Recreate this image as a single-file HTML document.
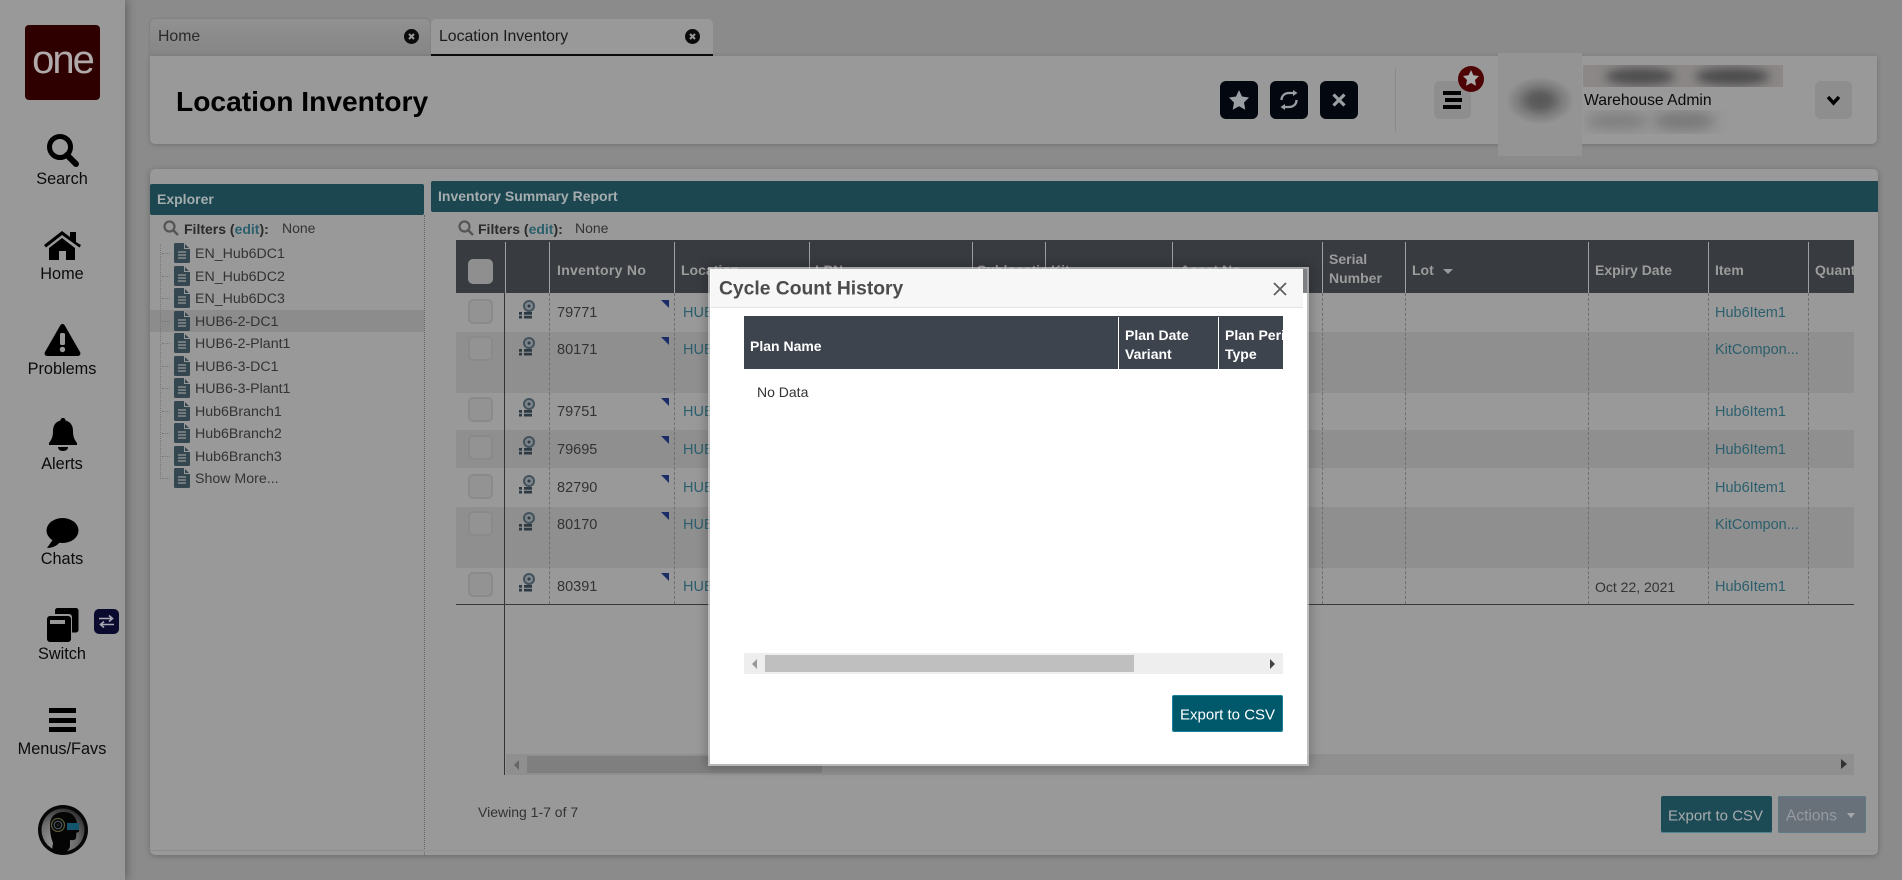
<!DOCTYPE html>
<html><head><meta charset="utf-8"><title>Location Inventory</title>
<style>
html,body{margin:0;padding:0;width:1902px;height:880px;overflow:hidden;background:#8b8b8b;font-family:"Liberation Sans",sans-serif}
div,span,svg{position:absolute}
.t{white-space:nowrap;line-height:1;transform:translateY(-50%);color:#333;font-size:14px}
.c{transform:translate(-50%,calc(-50% + 1px));color:#0b0b0b;font-size:16.300px}
.h{color:#9c9c9c;font-weight:bold;font-size:14px}
.l{color:#2c5f6d}
.b{font-weight:bold}
.sep{width:1px;top:242px;height:51px;background:#a0a0a0}
.dash{width:0;top:293px;height:311px;border-left:1px dashed #6f6f6f}
.cb{left:468px;width:21px;height:21px;border:2px solid #8a8a8a;border-radius:5px;background:#939393}
.band{left:456px;width:1398px;background:#8f8f8f}
.tri{left:661px;width:0;height:0;border-left:8px solid transparent;border-top:8px solid #1b2c66}
.tl{left:195px;font-size:14.200px;color:#333;transform:translateY(calc(-50% + 1px))}
.r{font-size:14.500px;transform:translateY(calc(-50% + 1px))}
.st{left:162px;width:8px;height:0;border-top:1px dotted #777}
</style></head><body>
<!-- sidebar -->
<div style="left:0;top:0;width:125px;height:880px;background:#999;box-shadow:3px 0 8px rgba(0,0,0,.25)"></div>
<div style="left:25px;top:25px;width:75px;height:75px;background:#2e0000;border-radius:4px"></div>
<div class="t" style="left:25px;top:60px;font-size:40px;color:#b0aaaa;letter-spacing:-2px;width:75px;text-align:center">one</div>
<svg style="left:46px;top:133px" width="34" height="34" viewBox="0 0 34 34"><circle cx="14" cy="14" r="10.500" fill="none" stroke="#000" stroke-width="5"/><path d="M21 22l9 9" stroke="#000" stroke-width="6" stroke-linecap="round"/></svg>
<div class="t c" style="left:62px;top:178px">Search</div>
<svg style="left:44px;top:230px" width="37" height="30" viewBox="0 0 37 30"><path d="M0 15L18 1l8 6V2h6v10l5 3-1.500 2.500L18 5 2 17.500z" fill="#000"/><path d="M5 18L18 8l13 10v12h-9v-9h-7v9H5z" fill="#000"/></svg>
<div class="t c" style="left:62px;top:273px">Home</div>
<svg style="left:44px;top:323px" width="37" height="34" viewBox="0 0 37 34"><path d="M18.500 1c1 0 1.800.6 2.300 1.500L36 29c1 2 0 4-2.300 4H3.300C1 33 0 31 1 29L16.200 2.500C16.700 1.600 17.500 1 18.500 1z" fill="#000"/><rect x="16" y="10" width="5" height="12" rx="1.500" fill="#999"/><circle cx="18.500" cy="26.500" r="2.700" fill="#999"/></svg>
<div class="t c" style="left:62px;top:368px">Problems</div>
<svg style="left:48px;top:418px" width="30" height="34" viewBox="0 0 30 34"><path d="M15 0c1.500 0 2.500 1 2.500 2.500C23 4 25 8 25 13c0 7 2 9 4 12v2H1v-2c2-3 4-5 4-12 0-5 2-9 7.500-10.500C12.500 1 13.500 0 15 0z" fill="#000"/><path d="M10 29h10c0 2.500-2 4-5 4s-5-1.500-5-4z" fill="#000"/></svg>
<div class="t c" style="left:62px;top:463px">Alerts</div>
<svg style="left:46px;top:518px" width="33" height="30" viewBox="0 0 33 30"><ellipse cx="16.500" cy="12.500" rx="16" ry="12.500" fill="#000"/><path d="M8 20L1 30c5 0 10-2 13-6z" fill="#000"/></svg>
<div class="t c" style="left:62px;top:558px">Chats</div>
<svg style="left:46px;top:608px" width="33" height="34" viewBox="0 0 33 34"><path d="M9 2.500A2.500 2.500 0 0 1 11.500 0H30a2.500 2.500 0 0 1 2.500 2.500V22a2.500 2.500 0 0 1-2.500 2.500h-4V9a3 3 0 0 0-3-3H9z" fill="#000"/><rect x="1" y="8" width="24" height="26" rx="3" fill="#000"/><rect x="4" y="12" width="15" height="4" fill="#999"/></svg>
<div style="left:94px;top:609px;width:25px;height:25px;border-radius:5px;background:#0a0a2e"></div>
<svg style="left:98px;top:614px" width="17" height="15" viewBox="0 0 17 15"><path d="M1 4.500h13M11 1.500l3.500 3-3.500 3M16 10.500H3M6 7.500l-3.500 3 3.500 3" fill="none" stroke="#a9a9b5" stroke-width="1.600"/></svg>
<div class="t c" style="left:62px;top:653px">Switch</div>
<div style="left:49px;top:708px;width:27px;height:5px;background:#000"></div>
<div style="left:49px;top:718px;width:27px;height:5px;background:#000"></div>
<div style="left:49px;top:727px;width:27px;height:5px;background:#000"></div>
<div class="t c" style="left:62px;top:748px">Menus/Favs</div>
<svg style="left:38px;top:805px" width="50" height="50" viewBox="0 0 50 50"><defs><radialGradient id="ag" cx=".35" cy=".75" r=".8"><stop offset="0" stop-color="#9a9a9a"/><stop offset=".6" stop-color="#6a6a6a"/><stop offset="1" stop-color="#2e2e2e"/></radialGradient></defs><circle cx="25" cy="25" r="25" fill="#070707"/><circle cx="25" cy="25" r="21.500" fill="url(#ag)"/><path d="M12 20C12 11 18 7 26 7c7 0 12 4 13 11l2 7c.5 2-1 2.500-2.500 2.500L38 33c-.5 2-3 2.500-6 2v6c0 2-2 5-5 6-5 1-10 0-13-1l1-8c-2-5-3-10-3-18z" fill="#050505"/><rect x="29" y="18" width="12" height="7" fill="#14556e"/><circle cx="20" cy="20" r="6.500" fill="none" stroke="#58583a" stroke-width="1.300"/><circle cx="20" cy="20" r="3.800" fill="none" stroke="#4a5a60" stroke-width="1.200"/><circle cx="20" cy="20" r="1.500" fill="#222"/></svg>

<!-- tabs -->
<div style="left:150px;top:19px;width:280px;height:37px;background:linear-gradient(#919191,#858585);border-radius:5px 5px 0 0;box-shadow:0 0 2px rgba(0,0,0,.2)"></div>
<div class="t" style="left:158px;top:37px;font-size:15.800px;color:#2a2a2a">Home</div>
<svg style="left:404px;top:29px" width="15" height="15" viewBox="0 0 15 15"><circle cx="7.500" cy="7.500" r="7.500" fill="#0b0b0b"/><path d="M5 5l5 5M10 5l-5 5" stroke="#999" stroke-width="2"/></svg>
<div style="left:431px;top:19px;width:282px;height:35px;background:#999;border-bottom:2px solid #0b0b0b;border-radius:5px 5px 0 0"></div>
<div class="t" style="left:439px;top:37px;font-size:15.800px;color:#1a1a1a">Location Inventory</div>
<svg style="left:685px;top:29px" width="15" height="15" viewBox="0 0 15 15"><circle cx="7.500" cy="7.500" r="7.500" fill="#0b0b0b"/><path d="M5 5l5 5M10 5l-5 5" stroke="#999" stroke-width="2"/></svg>

<!-- header -->
<div style="left:150px;top:56px;width:1727px;height:88px;background:#999;border-radius:0 0 5px 5px;box-shadow:0 1px 5px rgba(0,0,0,.2)"></div>
<div class="t b" style="left:176px;top:101px;font-size:28.200px;color:#000">Location Inventory</div>
<div style="left:1220px;top:81px;width:38px;height:38px;border-radius:6px;background:#030810"></div>
<div style="left:1270px;top:81px;width:38px;height:38px;border-radius:6px;background:#030810"></div>
<div style="left:1320px;top:81px;width:38px;height:38px;border-radius:6px;background:#030810"></div>
<svg style="left:1229px;top:90px" width="20" height="20" viewBox="0 0 20 20"><path d="M10 0l3 6.500 7 1-5 5 1.300 7.200L10 16.200 3.700 19.700 5 12.500 0 7.500l7-1z" fill="#9a9fa3"/></svg>
<svg style="left:1279px;top:90px" width="20" height="20" viewBox="0 0 20 20"><path d="M2.500 10C2.500 5.500 6 3 10 3h5M17.500 10c0 4.500-3.500 7-7.500 7H5" fill="none" stroke="#9a9fa3" stroke-width="2.300"/><path d="M14 0l4.500 3-4.500 3zM6 14l-4.500 3L6 20z" fill="#9a9fa3"/></svg>
<svg style="left:1331px;top:92px" width="16" height="16" viewBox="0 0 16 16"><path d="M2.500 2.500l11 11M13.500 2.500l-11 11" stroke="#9a9fa3" stroke-width="3.200"/></svg>
<div style="left:1395px;top:69px;width:1px;height:62px;background:#888"></div>
<div style="left:1434px;top:81px;width:37px;height:38px;border-radius:6px;background:#8e8e8e"></div>
<div style="left:1443px;top:91px;width:18px;height:4px;background:#000"></div>
<div style="left:1445px;top:98px;width:17px;height:4px;background:#000"></div>
<div style="left:1443px;top:105px;width:18px;height:4px;background:#000"></div>
<div style="left:1458px;top:66px;width:26px;height:26px;border-radius:50%;background:#4e0404"></div>
<svg style="left:1463px;top:70px" width="16" height="16" viewBox="0 0 20 20"><path d="M10 0l3 6.500 7 1-5 5 1.300 7.200L10 16.200 3.700 19.700 5 12.500 0 7.500l7-1z" fill="#aaa"/></svg>
<div style="left:1498px;top:53px;width:84px;height:103px;background:radial-gradient(ellipse 34px 24px at 50% 46%,#575757 0,#5f5f5f 30%,#7d7d7d 65%,#949494 100%);background-color:#979797"></div>
<div style="left:1583px;top:65px;width:200px;height:22px;background:#8c8888;overflow:hidden"><div style="left:22px;top:3px;width:70px;height:17px;background:#4c4c4c;border-radius:50%;filter:blur(5px)"></div><div style="left:112px;top:3px;width:75px;height:17px;background:#4a4a4a;border-radius:50%;filter:blur(5px)"></div></div>
<div class="t" style="left:1584px;top:101px;font-size:15.700px;color:#0b0b0b">Warehouse Admin</div>
<div style="left:1583px;top:110px;width:145px;height:24px;background:#989898;overflow:hidden"><div style="left:3px;top:3px;width:62px;height:16px;background:#7e7e7e;border-radius:45%;filter:blur(6px)"></div><div style="left:70px;top:2px;width:62px;height:18px;background:#787878;border-radius:45%;filter:blur(6px)"></div></div>
<div style="left:1815px;top:81px;width:37px;height:38px;border-radius:6px;background:#8e8e8e"></div>
<svg style="left:1826px;top:95px" width="15" height="11" viewBox="0 0 15 11"><path d="M2 2l5.500 6L13 2" fill="none" stroke="#000" stroke-width="3.500"/></svg>

<!-- main panel -->
<div style="left:150px;top:169px;width:1728px;height:686px;background:#999;border-radius:5px;box-shadow:0 1px 6px rgba(0,0,0,.25)"></div>
<div style="left:150px;top:184px;width:274px;height:31px;background:#1c4650;border-radius:2px"></div>
<div class="t h" style="left:157px;top:199px;color:#a5adaf">Explorer</div>
<div style="left:424px;top:215px;height:640px;width:0;border-left:1px dotted #666"></div>
<div style="left:150px;top:850px;width:274px;height:1px;background:#8c8c8c"></div>
<div style="left:424px;top:850px;width:1454px;height:1px;background:#949494"></div>
<svg style="left:163px;top:220px" width="16" height="16" viewBox="0 0 16 16"><circle cx="6.500" cy="6.500" r="5" fill="none" stroke="#555" stroke-width="2.200"/><path d="M10.500 10.500l4.500 4.500" stroke="#555" stroke-width="2.500"/></svg>
<div class="t b" style="left:184px;top:229px;font-size:14px;color:#2b2b2b">Filters (<span class="l" style="position:static">edit</span>):</div>
<div class="t" style="left:282px;top:228px;font-size:14px">None</div>
<div style="left:150px;top:310px;width:274px;height:22px;background:#8c8c8c"></div>
<div style="left:160px;top:244px;height:235px;width:0;border-left:1px dotted #777"></div>
<div class="st" style="top:253px"></div><div class="st" style="top:276px"></div><div class="st" style="top:298px"></div><div class="st" style="top:321px"></div><div class="st" style="top:343px"></div><div class="st" style="top:366px"></div><div class="st" style="top:388px"></div><div class="st" style="top:411px"></div><div class="st" style="top:433px"></div><div class="st" style="top:456px"></div><div class="st" style="top:478px"></div>
<svg width="0" height="0"><defs><g id="f"><path d="M0 1.500A1.500 1.500 0 0 1 1.500 0H10l6 6v12.500a1.500 1.500 0 0 1-1.500 1.500h-13A1.500 1.500 0 0 1 0 18.500z" fill="#344650"/><path d="M10.500 0v5.500H16" fill="none" stroke="#999" stroke-width="1"/><path d="M4 9h8M4 12h8M4 15h8" stroke="#999" stroke-width="1.300"/></g></defs></svg>
<svg style="left:174px;top:243px" width="16" height="20"><use href="#f"/></svg>
<svg style="left:174px;top:266px" width="16" height="20"><use href="#f"/></svg>
<svg style="left:174px;top:288px" width="16" height="20"><use href="#f"/></svg>
<svg style="left:174px;top:311px" width="16" height="20"><use href="#f"/></svg>
<svg style="left:174px;top:333px" width="16" height="20"><use href="#f"/></svg>
<svg style="left:174px;top:356px" width="16" height="20"><use href="#f"/></svg>
<svg style="left:174px;top:378px" width="16" height="20"><use href="#f"/></svg>
<svg style="left:174px;top:401px" width="16" height="20"><use href="#f"/></svg>
<svg style="left:174px;top:423px" width="16" height="20"><use href="#f"/></svg>
<svg style="left:174px;top:446px" width="16" height="20"><use href="#f"/></svg>
<svg style="left:174px;top:468px" width="16" height="20"><use href="#f"/></svg>
<div class="t tl" style="top:253px">EN_Hub6DC1</div>
<div class="t tl" style="top:276px">EN_Hub6DC2</div>
<div class="t tl" style="top:298px">EN_Hub6DC3</div>
<div class="t tl" style="top:321px">HUB6-2-DC1</div>
<div class="t tl" style="top:343px">HUB6-2-Plant1</div>
<div class="t tl" style="top:366px">HUB6-3-DC1</div>
<div class="t tl" style="top:388px">HUB6-3-Plant1</div>
<div class="t tl" style="top:411px">Hub6Branch1</div>
<div class="t tl" style="top:433px">Hub6Branch2</div>
<div class="t tl" style="top:456px">Hub6Branch3</div>
<div class="t tl" style="top:478px">Show More...</div>

<!-- report -->
<div style="left:431px;top:181px;width:1447px;height:31px;background:#1c4650;border-radius:2px 0 0 2px"></div>
<div class="t h" style="left:438px;top:196px;color:#a5adaf">Inventory Summary Report</div>
<svg style="left:458px;top:220px" width="16" height="16" viewBox="0 0 16 16"><circle cx="6.500" cy="6.500" r="5" fill="none" stroke="#555" stroke-width="2.200"/><path d="M10.500 10.500l4.500 4.500" stroke="#555" stroke-width="2.500"/></svg>
<div class="t b" style="left:478px;top:229px;font-size:14px;color:#2b2b2b">Filters (<span class="l" style="position:static">edit</span>):</div>
<div class="t" style="left:575px;top:228px;font-size:14px">None</div>

<div class="band" style="top:332px;height:61px"></div>
<div class="band" style="top:430px;height:38px"></div>
<div class="band" style="top:507px;height:61px"></div>
<div style="left:456px;top:240px;width:1398px;height:53px;background:#383b40"></div>
<div class="sep" style="left:505px"></div><div class="sep" style="left:549px"></div><div class="sep" style="left:674px"></div><div class="sep" style="left:809px"></div><div class="sep" style="left:972px"></div><div class="sep" style="left:1045px"></div><div class="sep" style="left:1172px"></div><div class="sep" style="left:1322px"></div><div class="sep" style="left:1405px"></div><div class="sep" style="left:1588px"></div><div class="sep" style="left:1708px"></div><div class="sep" style="left:1808px"></div>
<div style="left:549px" class="dash"></div><div style="left:674px" class="dash"></div><div style="left:1322px" class="dash"></div><div style="left:1405px" class="dash"></div><div style="left:1588px" class="dash"></div><div style="left:1708px" class="dash"></div><div style="left:1808px" class="dash"></div>
<div style="left:504px;top:293px;width:1px;height:482px;background:#333"></div>
<div style="left:456px;top:604px;width:1398px;height:1px;background:#383838"></div>
<div style="left:468px;top:259px;width:21px;height:21px;border-radius:5px;border:2px solid #8f8f8f;background:#8f8f8f"></div>
<div class="t h" style="left:557px;top:270px;letter-spacing:.3px">Inventory No</div>
<div class="t h" style="left:681px;top:270px">Location</div>
<div class="t h" style="left:815px;top:270px">LPN</div>
<div class="t h" style="left:977px;top:270px">Sublocation</div>
<div class="t h" style="left:1051px;top:270px">Kit</div>
<div class="t h" style="left:1180px;top:270px">Asset No</div>
<div class="t h" style="left:1329px;top:259px">Serial</div>
<div class="t h" style="left:1329px;top:278px">Number</div>
<div class="t h" style="left:1412px;top:270px">Lot</div>
<div style="left:1443px;top:269px;width:0;height:0;border:5px solid transparent;border-top:5px solid #9c9c9c"></div>
<div class="t h" style="left:1595px;top:270px">Expiry Date</div>
<div class="t h" style="left:1715px;top:270px">Item</div>
<div style="left:1815px;top:240px;width:39px;height:53px;overflow:hidden"><div class="t h" style="left:0;top:30px">Quantity</div></div>

<svg width="0" height="0"><defs><g id="i"><circle cx="11" cy="7" r="5" fill="#7d858b" stroke="#44525c" stroke-width="2"/><circle cx="11" cy="7" r="1.500" fill="#2d3a44"/><path d="M1 13h3v2.700H1zM6 13h8v2.700H6zM1 16.800h3v2.700H1zM6 16.800h8v2.700H6z" fill="#2d3a44"/></g></defs></svg>

<div class="cb" style="top:299px"></div><svg style="left:518px;top:299px" width="18" height="20"><use href="#i"/></svg><div class="t r" style="left:557px;top:312px">79771</div><div class="tri" style="top:300px"></div><div class="t r l" style="left:683px;top:312px">HUB6-2-DC1</div><div class="t r l" style="left:1715px;top:312px">Hub6Item1</div>
<div class="cb" style="top:336px"></div><svg style="left:518px;top:336px" width="18" height="20"><use href="#i"/></svg><div class="t r" style="left:557px;top:349px">80171</div><div class="tri" style="top:337px"></div><div class="t r l" style="left:683px;top:349px">HUB6-2-DC1</div><div class="t r l" style="left:1715px;top:349px">KitCompon...</div>
<div class="cb" style="top:397px"></div><svg style="left:518px;top:397px" width="18" height="20"><use href="#i"/></svg><div class="t r" style="left:557px;top:411px">79751</div><div class="tri" style="top:398px"></div><div class="t r l" style="left:683px;top:411px">HUB6-2-DC1</div><div class="t r l" style="left:1715px;top:411px">Hub6Item1</div>
<div class="cb" style="top:435px"></div><svg style="left:518px;top:435px" width="18" height="20"><use href="#i"/></svg><div class="t r" style="left:557px;top:449px">79695</div><div class="tri" style="top:436px"></div><div class="t r l" style="left:683px;top:449px">HUB6-2-DC1</div><div class="t r l" style="left:1715px;top:449px">Hub6Item1</div>
<div class="cb" style="top:474px"></div><svg style="left:518px;top:474px" width="18" height="20"><use href="#i"/></svg><div class="t r" style="left:557px;top:487px">82790</div><div class="tri" style="top:475px"></div><div class="t r l" style="left:683px;top:487px">HUB6-2-DC1</div><div class="t r l" style="left:1715px;top:487px">Hub6Item1</div>
<div class="cb" style="top:511px"></div><svg style="left:518px;top:511px" width="18" height="20"><use href="#i"/></svg><div class="t r" style="left:557px;top:524px">80170</div><div class="tri" style="top:512px"></div><div class="t r l" style="left:683px;top:524px">HUB6-2-DC1</div><div class="t r l" style="left:1715px;top:524px">KitCompon...</div>
<div class="cb" style="top:572px"></div><svg style="left:518px;top:572px" width="18" height="20"><use href="#i"/></svg><div class="t r" style="left:557px;top:586px">80391</div><div class="tri" style="top:573px"></div><div class="t r l" style="left:683px;top:586px">HUB6-2-DC1</div><div class="t r" style="left:1595px;top:586px;font-size:14px">Oct 22, 2021</div><div class="t r l" style="left:1715px;top:586px">Hub6Item1</div>

<div style="left:506px;top:754px;width:1348px;height:21px;background:#8f8f8f"></div>
<div style="left:527px;top:756px;width:295px;height:17px;background:#7f7f7f"></div>
<div style="left:514px;top:760px;width:0;height:0;border:5px solid transparent;border-left:0;border-right:5px solid #666"></div>
<div style="left:1841px;top:759px;width:0;height:0;border:5px solid transparent;border-right:0;border-left:6px solid #333"></div>
<div class="t" style="left:478px;top:812px;font-size:14px">Viewing 1-7 of 7</div>
<div style="left:1661px;top:796px;width:111px;height:37px;background:#1c4a55;border-radius:2px;box-shadow:inset 0 -1px 0 #4d8490"></div>
<div class="t" style="left:1668px;top:816px;font-size:15px;color:#a8adae">Export to CSV</div>
<div style="left:1778px;top:796px;width:88px;height:37px;background:#68707a;border-radius:2px;box-shadow:inset 0 0 0 1px #5e7a85"></div>
<div class="t" style="left:1786px;top:816px;font-size:15.500px;color:#979b9f">Actions</div>
<div style="left:1847px;top:813px;width:0;height:0;border:4.500px solid transparent;border-top:5px solid #a5a8ab"></div>

<!-- modal -->
<div style="left:710px;top:269px;width:597px;height:495px;background:#fff;box-shadow:0 0 0 2px rgba(215,215,215,.7),0 0 10px 4px rgba(0,0,0,.22)"></div>
<div style="left:1303px;top:269px;width:4px;height:24px;background:#7d7f82"></div>
<div style="left:711px;top:269px;width:592px;height:38px;background:#f7f7f7;border-bottom:1px solid #e4e4e4"></div>
<div class="t b" style="left:719px;top:289px;font-size:19.300px;color:#4c4c4c">Cycle Count History</div>
<svg style="left:1273px;top:282px" width="14" height="14" viewBox="0 0 14 14"><path d="M1 1l12 12M13 1L1 13" stroke="#606060" stroke-width="1.800"/></svg>
<div style="left:744px;top:316px;width:539px;height:53px;background:#3d444e"></div>
<div style="left:1118px;top:317px;width:1px;height:52px;background:#fff"></div>
<div style="left:1218px;top:317px;width:1px;height:52px;background:#fff"></div>
<div class="t b" style="left:750px;top:346px;font-size:14px;color:#fff">Plan Name</div>
<div class="t b" style="left:1125px;top:335px;font-size:14px;color:#fff">Plan Date</div>
<div class="t b" style="left:1125px;top:354px;font-size:14px;color:#fff">Variant</div>
<div style="left:1225px;top:325px;width:58px;height:40px;overflow:hidden"><div class="t b" style="left:0;top:10px;font-size:14px;color:#fff">Plan Period</div><div class="t b" style="left:0;top:29px;font-size:14px;color:#fff">Type</div></div>
<div class="t" style="left:757px;top:392px;font-size:14px;color:#333">No Data</div>
<div style="left:744px;top:653px;width:539px;height:21px;background:#eee"></div>
<div style="left:765px;top:655px;width:369px;height:17px;background:#bfbfbf"></div>
<div style="left:752px;top:659px;width:0;height:0;border:5px solid transparent;border-left:0;border-right:5px solid #999"></div>
<div style="left:1270px;top:659px;width:0;height:0;border:5px solid transparent;border-right:0;border-left:5px solid #444"></div>
<div style="left:1172px;top:695px;width:109px;height:35px;background:#00586b;border:1px solid #1a8298;border-radius:2px"></div>
<div class="t" style="left:1180px;top:715px;font-size:15px;color:#fff">Export to CSV</div>
</body></html>
